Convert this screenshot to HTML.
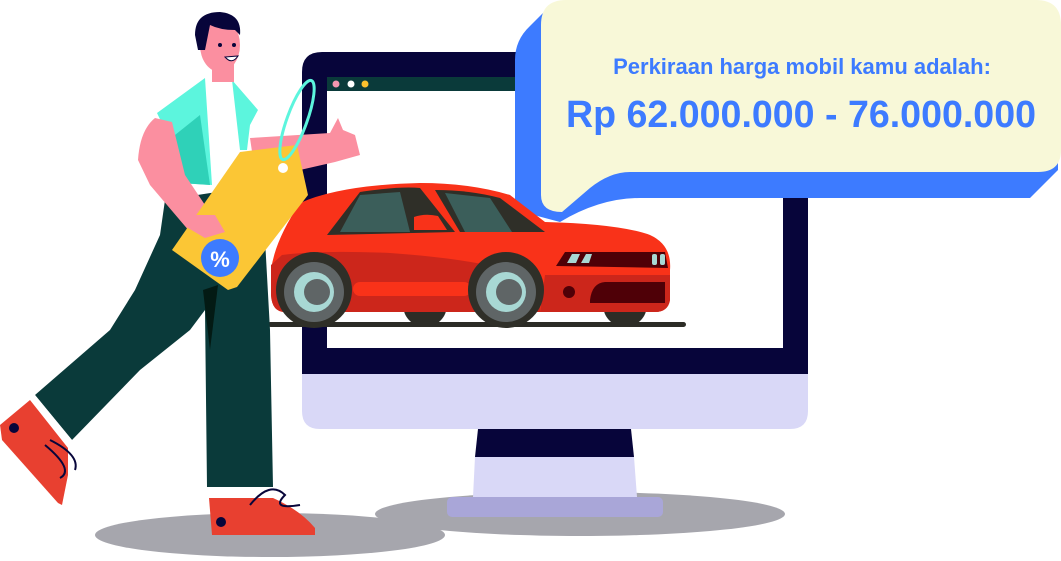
<!DOCTYPE html>
<html><head><meta charset="utf-8"><style>
html,body{margin:0;padding:0;background:#fff;width:1061px;height:561px;overflow:hidden}
svg{display:block}
text{font-family:"Liberation Sans",sans-serif;font-weight:bold}
</style></head><body>
<svg width="1061" height="561" viewBox="0 0 1061 561" xmlns="http://www.w3.org/2000/svg">
<!-- shadows -->
<ellipse cx="270" cy="535" rx="175" ry="22" fill="#a6a6ad"/>
<ellipse cx="580" cy="514" rx="205" ry="22" fill="#a6a6ad"/>
<!-- monitor -->
<path d="M322 52 H788 Q808 52 808 72 V374 H302 V72 Q302 52 322 52Z" fill="#07053a"/>
<path d="M302 374 H808 V411 Q808 429 790 429 H320 Q302 429 302 411Z" fill="#d9d8f7"/>
<rect x="327" y="77" width="456" height="271" fill="#fff"/>
<rect x="327" y="77" width="456" height="14" fill="#0a3a3a"/>
<circle cx="336" cy="84" r="3.5" fill="#f497b0"/>
<circle cx="351" cy="84" r="3.5" fill="#fff"/>
<circle cx="365" cy="84" r="3.5" fill="#fbc02d"/>
<path d="M478 429 H631 L634 457 H475Z" fill="#07053a"/>
<path d="M475 457 H634 L637 497 H473Z" fill="#d9d8f7"/>
<rect x="447" y="497" width="216" height="20" rx="5" fill="#a9a6d8"/>
<!-- bubble -->
<path d="M548 8 L530 26 Q515 40 515 60 V210 L560 222 Q600 198 640 198 H1030 L1058 170 V30 Z" fill="#3d7bff"/>
<path d="M566 0 H1036 Q1061 0 1061 25 V150 Q1061 172 1038 172 H630 Q610 172 590 188 L562 212 Q541 212 541 195 V25 Q541 0 566 0Z" fill="#f8f8d8"/>
<text x="802" y="74" font-size="22" fill="#3d7bff" text-anchor="middle">Perkiraan harga mobil kamu adalah:</text>
<text x="801" y="127" font-size="38" fill="#3d7bff" text-anchor="middle" textLength="470" lengthAdjust="spacingAndGlyphs">Rp 62.000.000 - 76.000.000</text>
<!-- car -->
<rect x="268" y="322" width="418" height="5" rx="2.5" fill="#2c2c26"/>
<circle cx="425" cy="305" r="22" fill="#2c2c26"/>
<circle cx="625" cy="305" r="22" fill="#2c2c26"/>
<path d="M300 203 Q340 185 420 183 Q470 183 510 195 L545 222 Q620 224 650 235 Q672 245 670 270 V300 Q668 312 655 312 H285 Q272 312 271 295 V270 Q275 240 300 203Z" fill="#f93219"/>
<path d="M282 255 Q320 250 390 253 Q460 258 500 268 L540 300 V312 H285 Q272 312 271 295 V265Z" fill="#cc261b"/>
<path d="M545 275 H670 V300 Q668 312 655 312 H540Z" fill="#cc261b"/>
<path d="M327 235 L360 192 Q400 186 420 188 L455 232Z" fill="#2f2f28"/>
<path d="M340 232 L360 195 L400 192 L410 232Z" fill="#3b5e5a"/>
<path d="M435 190 Q470 190 500 198 L545 232 L460 232Z" fill="#2f2f28"/>
<path d="M445 193 L490 198 L512 232 L465 232Z" fill="#3b5e5a"/>
<path d="M414 217 Q425 213 438 216 L447 230 L414 230Z" fill="#f93219"/>
<rect x="353" y="282" width="118" height="14" rx="7" fill="#f93219"/>
<path d="M556 266 L565 252 H665 L668 268Z" fill="#4f0007"/>
<path d="M567 263 L572 254 H580 L576 263Z M581 263 L586 254 H592 L589 263Z" fill="#a8d8d4"/>
<rect x="652" y="254" width="5" height="11" rx="2" fill="#a8d8d4"/>
<rect x="660" y="254" width="5" height="11" rx="2" fill="#a8d8d4"/>
<path d="M590 300 Q592 283 605 282 H665 V303 H590Z" fill="#4f0007"/>
<circle cx="569" cy="292" r="6" fill="#4f0007"/>
<circle cx="314" cy="290" r="38" fill="#2f2f28"/>
<circle cx="314" cy="292" r="30" fill="#5f6566"/>
<circle cx="314" cy="292" r="20" fill="#a8d8d4"/>
<circle cx="317" cy="292" r="13" fill="#5f6566"/>
<circle cx="506" cy="290" r="38" fill="#2f2f28"/>
<circle cx="506" cy="292" r="30" fill="#5f6566"/>
<circle cx="506" cy="292" r="20" fill="#a8d8d4"/>
<circle cx="509" cy="292" r="13" fill="#5f6566"/>
<!-- man: pants -->
<path d="M165 200 L262 185 L270 330 L273 487 L207 487 L205 310 L190 330 L140 370 L72 440 L35 395 L110 330 L135 290 L160 235Z" fill="#0a3a3a"/>
<path d="M203 290 L218 285 L210 350Z" fill="#031a14"/>
<!-- socks -->
<rect x="209" y="487" width="64" height="12" fill="#fff"/>
<path d="M35 395 L72 440 L62 448 L28 405Z" fill="#fff"/>
<!-- shoes -->
<path d="M30 400 L68 448 L68 475 L62 505 L58 503 L2 440 L0 425Z" fill="#e84030"/>
<circle cx="14" cy="428" r="5" fill="#07053a"/>
<path d="M50 440 Q80 455 75 470 M45 445 Q75 470 60 478" stroke="#07053a" stroke-width="2" fill="none"/>
<path d="M209 498 L273 498 Q300 510 315 528 V535 H212Z" fill="#e84030"/>
<circle cx="221" cy="522" r="5" fill="#07053a"/>
<path d="M250 505 Q270 480 285 495 Q270 510 300 505" stroke="#07053a" stroke-width="2" fill="none"/>
<!-- torso -->
<rect x="205" y="80" width="32" height="110" fill="#fff"/>
<path d="M157 113 L205 78 L212 185 L180 183 L170 140Z" fill="#5cf5dd"/>
<path d="M232 80 L258 110 L250 125 L247 150 L240 150Z" fill="#5cf5dd"/>
<path d="M175 135 L200 115 L210 185 L180 183Z" fill="#2fd1b8"/>
<!-- arms -->
<path d="M250 138 L330 133 L338 118 L343 130 L355 135 L360 155 L335 162 L300 170 L255 172Z" fill="#fb8fa0"/>
<path d="M155 118 L172 122 L185 175 L205 205 L225 215 L228 240 L215 245 L190 232 L150 185 L138 160 Q140 130 155 118Z" fill="#fb8fa0"/>
<!-- head -->
<rect x="212" y="60" width="22" height="22" fill="#fb8fa0"/>
<ellipse cx="220" cy="45" rx="20" ry="27" fill="#fb8fa0"/>
<path d="M195 35 Q195 12 220 12 Q242 14 240 35 L235 30 Q220 30 210 25 L205 50 L198 50Z" fill="#07053a"/>
<path d="M225 57 Q232 65 238 56Z" fill="#fff" stroke="#07053a" stroke-width="1"/>
<circle cx="220" cy="45" r="2" fill="#07053a"/>
<circle cx="234" cy="45" r="2" fill="#07053a"/>
<!-- tag -->
<path d="M240 152 L297 145 L308 195 L237 287 L228 290 L172 250Z" fill="#fbc635"/>
<circle cx="283" cy="168" r="5" fill="#fff"/>
<ellipse cx="297" cy="120" rx="10" ry="42" transform="rotate(20 297 120)" fill="none" stroke="#5cf5dd" stroke-width="3"/>
<circle cx="220" cy="258" r="19" fill="#3d7bff"/>
<text x="220" y="267" font-size="22" fill="#fff" text-anchor="middle">%</text>
<path d="M190 215 L215 215 L225 232 L205 238 L188 228Z" fill="#fb8fa0"/>
</svg>
</body></html>
